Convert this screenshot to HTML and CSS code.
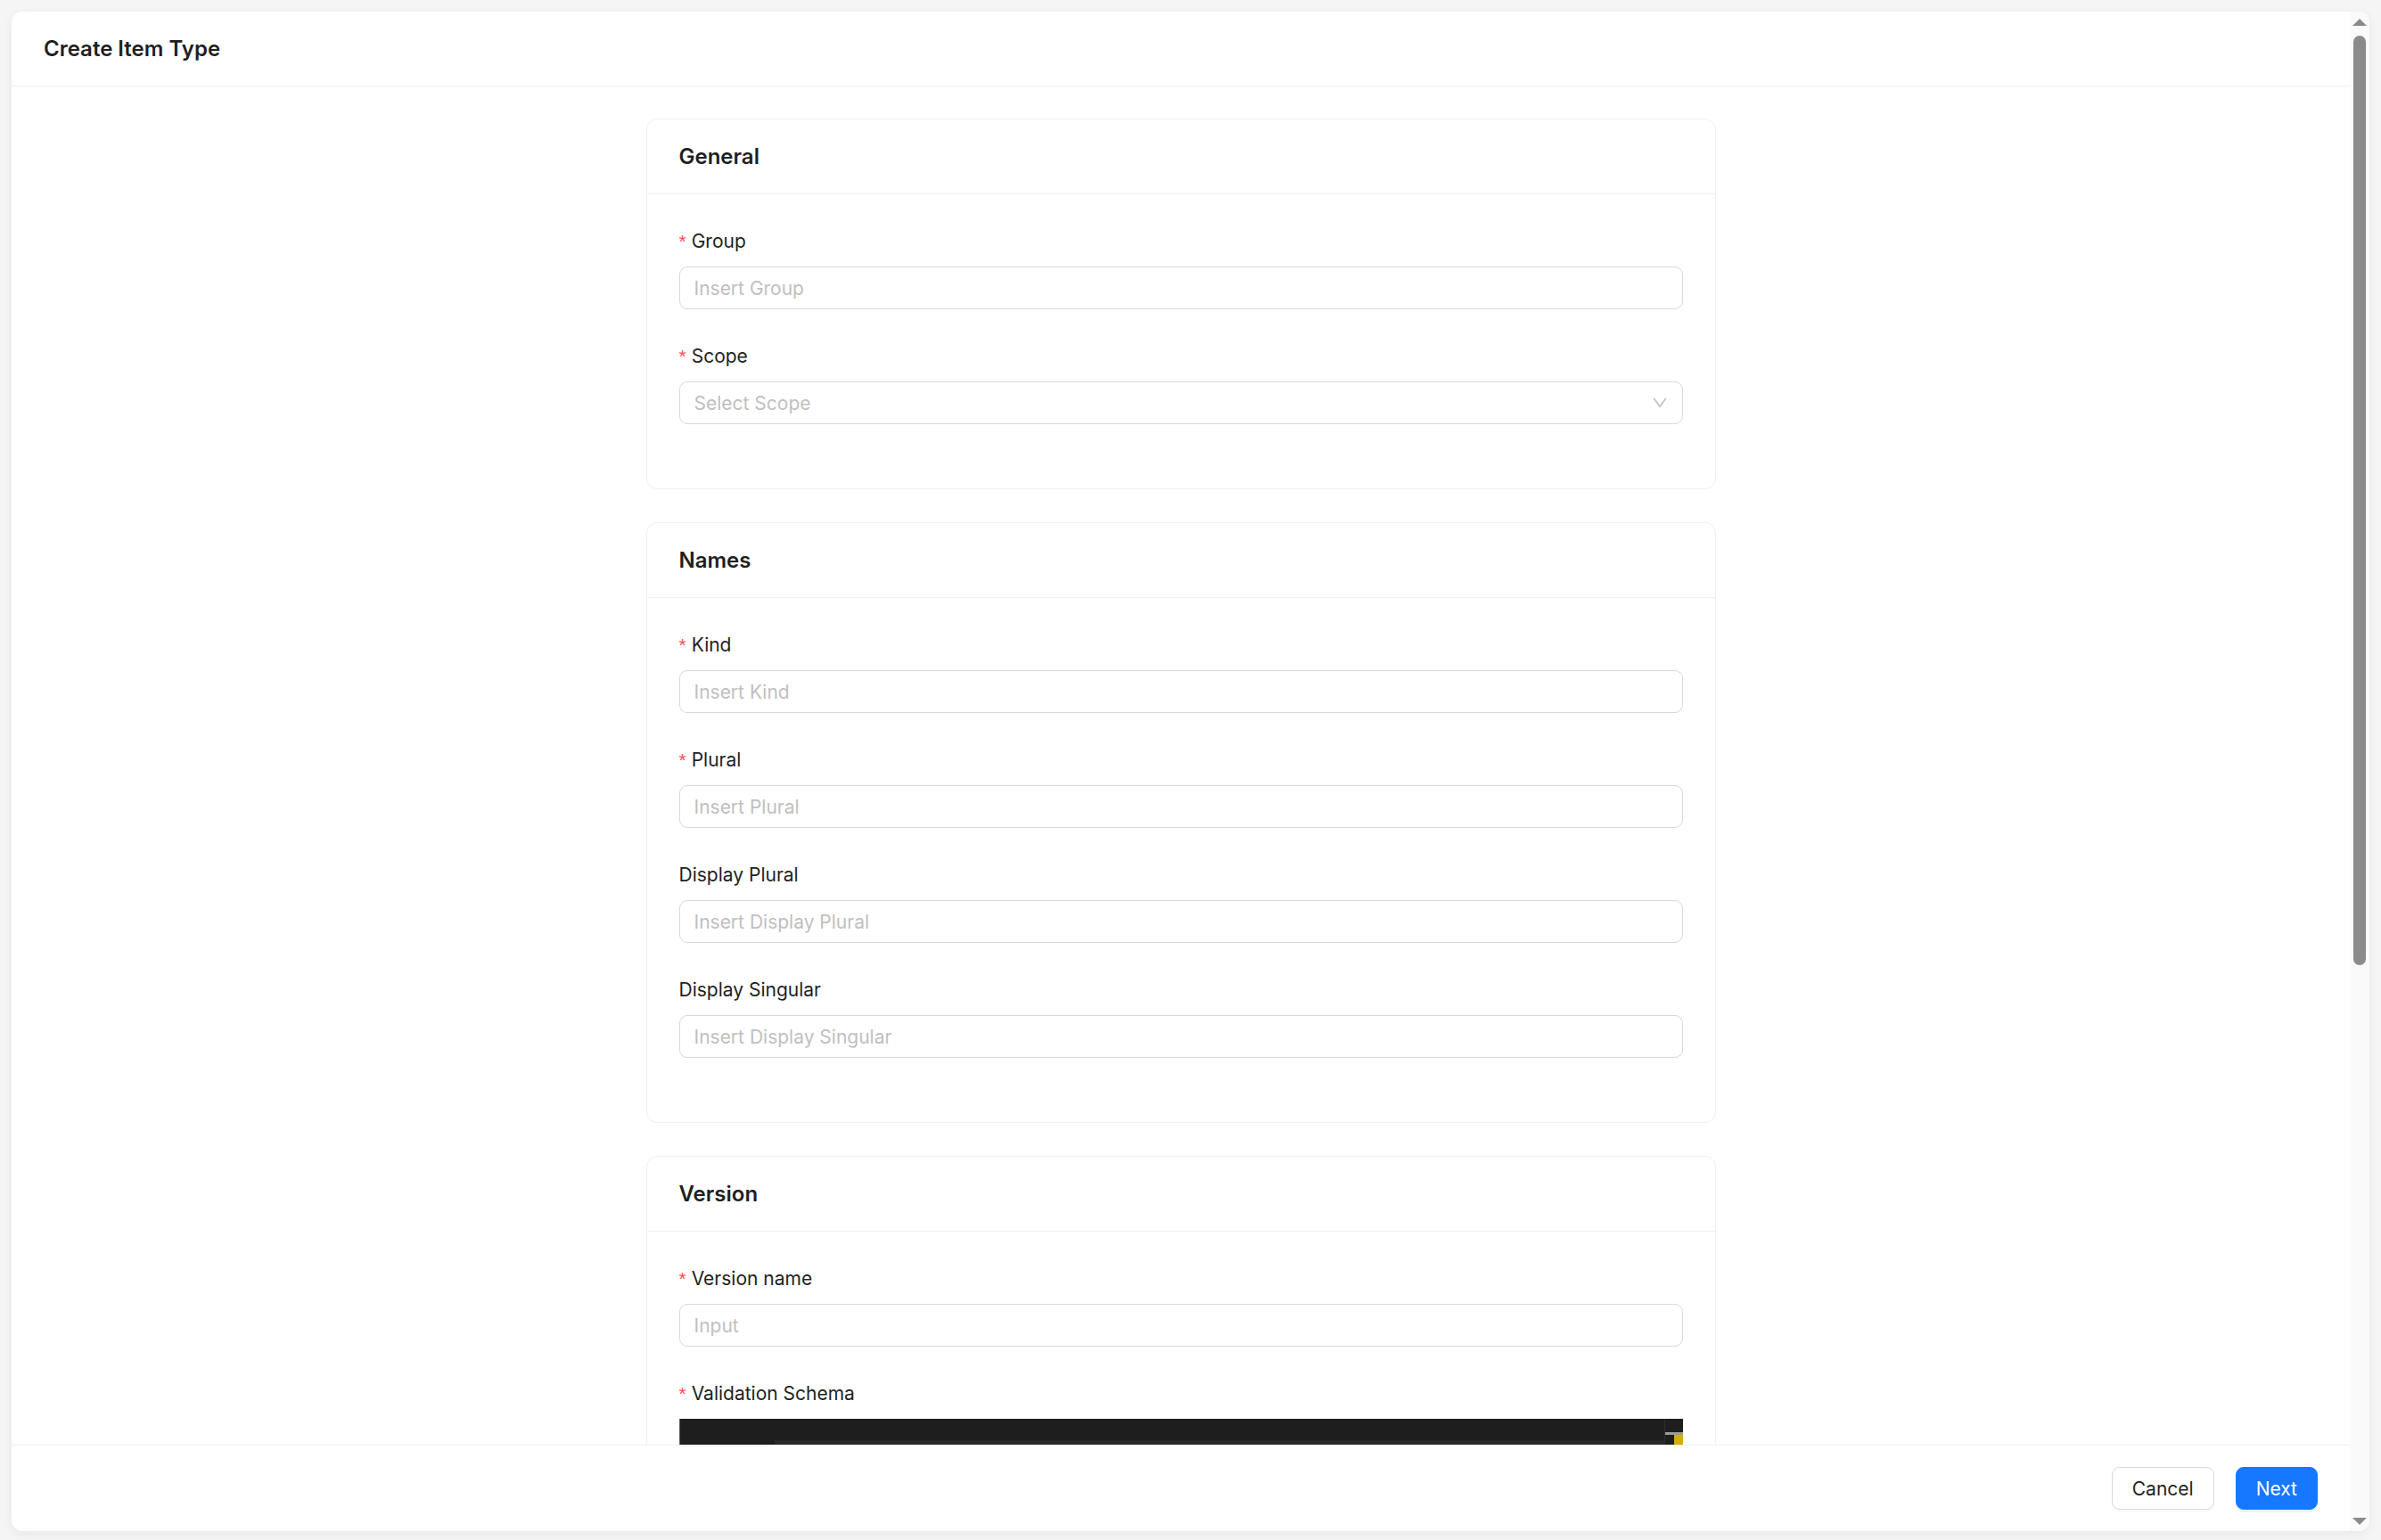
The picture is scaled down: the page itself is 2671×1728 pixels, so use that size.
FILE: index.html
```html
<!DOCTYPE html>
<html lang="en">
<head>
  <meta charset="UTF-8" />
  <meta name="viewport" content="width=device-width, initial-scale=1.0"/>
  <title>Create Item Type</title>
  <link rel="stylesheet" href="styles.css">
</head>
<body>
  <div class="modal">
    <div class="modal-main">
      <div class="modal-head">Create Item Type</div>

      <div class="modal-body">
        <!-- GENERAL -->
        <div class="card">
          <div class="card-head">General</div>
          <div class="card-body">
            <div class="form-item">
              <label class="required">Group</label>
              <input type="text" placeholder="Insert Group" />
            </div>
            <div class="form-item">
              <label class="required">Scope</label>
              <div class="select">
                <span class="select-placeholder">Select Scope</span>
                <svg class="select-arrow" viewBox="64 64 896 896" width="18" height="18" fill="currentColor">
                  <path d="M884 256h-75c-5.1 0-9.9 2.5-12.9 6.6L512 654.2 227.9 262.6c-3-4.1-7.8-6.6-12.9-6.6h-75c-6.5 0-10.3 7.4-6.5 12.7l352.6 486.1c12.8 17.6 39 17.6 51.7 0l352.6-486.1c3.9-5.3.1-12.7-6.4-12.7z"/>
                </svg>
              </div>
            </div>
          </div>
        </div>

        <!-- NAMES -->
        <div class="card">
          <div class="card-head">Names</div>
          <div class="card-body">
            <div class="form-item">
              <label class="required">Kind</label>
              <input type="text" placeholder="Insert Kind" />
            </div>
            <div class="form-item">
              <label class="required">Plural</label>
              <input type="text" placeholder="Insert Plural" />
            </div>
            <div class="form-item">
              <label>Display Plural</label>
              <input type="text" placeholder="Insert Display Plural" />
            </div>
            <div class="form-item">
              <label>Display Singular</label>
              <input type="text" placeholder="Insert Display Singular" />
            </div>
          </div>
        </div>

        <!-- VERSION -->
        <div class="card">
          <div class="card-head">Version</div>
          <div class="card-body">
            <div class="form-item">
              <label class="required">Version name</label>
              <input type="text" placeholder="Input" />
            </div>
            <div class="form-item">
              <label class="required">Validation Schema</label>
              <div class="editor">
                <div class="editor-lines">
                  <div class="editor-line">
                    <span class="line-no">1</span>
                    <span class="line-code current"><span class="bracket">{</span></span>
                  </div>
                </div>
                <div class="editor-ruler">
                  <div class="ruler-mark"></div>
                  <div class="ruler-cursor"></div>
                </div>
              </div>
            </div>
          </div>
        </div>
      </div>

      <div class="modal-foot">
        <button class="btn">Cancel</button>
        <button class="btn btn-primary">Next</button>
      </div>
    </div>

    <!-- scroll rail of the dialog -->
    <div class="scrollbar">
      <span class="sb-arrow sb-up"></span>
      <div class="sb-track"><div class="sb-thumb"></div></div>
      <span class="sb-arrow sb-down"></span>
    </div>
  </div>
</body>
</html>
```

FILE: styles.css
```css
:root {
  --primary: #1677ff;
  --bg: #f5f5f5;
  --text: #1f1f1f;
  --muted: #bfbfbf;
  --border: #d9d9d9;
  --split: #f0f0f0;
  --danger: #ff4d4f;
  --rail: #8b8b8b;
}
* {
  box-sizing: border-box;
  font-family: Inter, 'Noto Sans', sans-serif;
}
html, body {
  height: 100%;
}
body {
  margin: 0;
  padding: 13px 13px 10px;
  background-color: var(--bg);
  color: var(--text);
  font-size: 21px;
}

.modal {
  height: 100%;
  display: flex;
  background: #fff;
  border-radius: 12px;
  box-shadow: 0 3px 12px rgba(0, 0, 0, 0.06);
  overflow: hidden;
}
.modal-main {
  flex: 1;
  min-width: 0;
  display: flex;
  flex-direction: column;
}
.modal-head {
  flex: none;
  height: 84px;
  padding: 0 36px;
  display: flex;
  align-items: center;
  border-bottom: 1px solid var(--split);
  font-size: 24px;
  font-weight: 600;
}
.modal-body {
  flex: 1;
  min-height: 0;
  overflow: hidden;
  padding: 36px 0;
  display: flex;
  flex-direction: column;
  align-items: center;
  gap: 37px;
}
.modal-foot {
  flex: none;
  padding: 24px 36px;
  display: flex;
  justify-content: flex-end;
  gap: 24px;
  border-top: 1px solid var(--split);
}

/* scroll rail */
.scrollbar {
  flex: none;
  width: 22px;
  display: flex;
  flex-direction: column;
  align-items: center;
  background: #fafafa;
}
.sb-arrow {
  flex: none;
  height: 23px;
  display: flex;
  align-items: center;
  justify-content: center;
}
.sb-arrow::before {
  content: '';
  width: 0;
  height: 0;
  border-left: 8px solid transparent;
  border-right: 8px solid transparent;
}
.sb-up::before {
  border-bottom: 8px solid var(--rail);
}
.sb-down::before {
  border-top: 8px solid var(--rail);
}
.sb-track {
  flex: 1;
  width: 100%;
  padding: 4px;
}
.sb-thumb {
  height: 1043px;
  background: var(--rail);
  border-radius: 7px;
}

.card {
  flex: none;
  width: 1200px;
  border: 1px solid var(--split);
  border-radius: 12px;
  background: #fff;
}
.card-head {
  height: 84px;
  padding: 0 36px;
  display: flex;
  align-items: center;
  border-bottom: 1px solid var(--split);
  font-size: 24px;
  font-weight: 600;
}
.card-body {
  padding: 36px;
}

.form-item {
  margin-bottom: 36px;
}
.form-item label {
  display: block;
  padding-bottom: 12px;
  line-height: 33px;
  font-size: 21px;
}
.form-item label.required::before {
  content: '*';
  display: inline-block;
  margin-right: 6px;
  color: var(--danger);
  font-family: 'Liberation Sans', sans-serif;
  font-size: 21px;
  line-height: 1;
}
input, .select {
  width: 100%;
  height: 48px;
  padding: 0 16px;
  border: 1px solid var(--border);
  border-radius: 9px;
  font-size: 21px;
  color: var(--text);
  background: #fff;
  outline: none;
}
input::placeholder {
  color: var(--muted);
}
.select {
  display: flex;
  align-items: center;
  justify-content: space-between;
}
.select-placeholder {
  color: var(--muted);
}
.select-arrow {
  color: var(--muted);
}

/* code editor box */
.editor {
  height: 900px;
  display: flex;
  background: #1e1e1e;
  border-left: 1px solid #5a5a5a;
  overflow: hidden;
}
.editor-lines {
  flex: 1;
  padding-top: 24px;
}
.editor-line {
  display: flex;
  height: 28px;
}
.line-no {
  width: 106px;
  padding-right: 32px;
  text-align: right;
  color: #858585;
  font-family: 'DejaVu Sans Mono', monospace;
  font-size: 20px;
  line-height: 28px;
}
.line-code {
  flex: 1;
  padding-left: 5px;
  font-family: 'DejaVu Sans Mono', monospace;
  font-size: 20px;
  line-height: 28px;
}
.line-code.current {
  background: #282828;
}
.bracket {
  color: #ffd700;
}
.editor-ruler {
  width: 21px;
  border-left: 1px solid #2e2e2e;
  padding-top: 15px;
}
.ruler-mark {
  height: 3px;
  background: #9a9a9a;
}
.ruler-cursor {
  margin-left: 10px;
  height: 12px;
  background: #d4ad00;
}

.btn {
  height: 48px;
  padding: 0 22px;
  border: 1px solid var(--border);
  border-radius: 9px;
  background: #fff;
  color: var(--text);
  font-size: 21px;
  cursor: pointer;
  box-shadow: 0 3px 0 rgba(0, 0, 0, 0.02);
}
.btn-primary {
  background: var(--primary);
  border-color: var(--primary);
  color: #fff;
  box-shadow: 0 3px 0 rgba(5, 145, 255, 0.1);
}
```
